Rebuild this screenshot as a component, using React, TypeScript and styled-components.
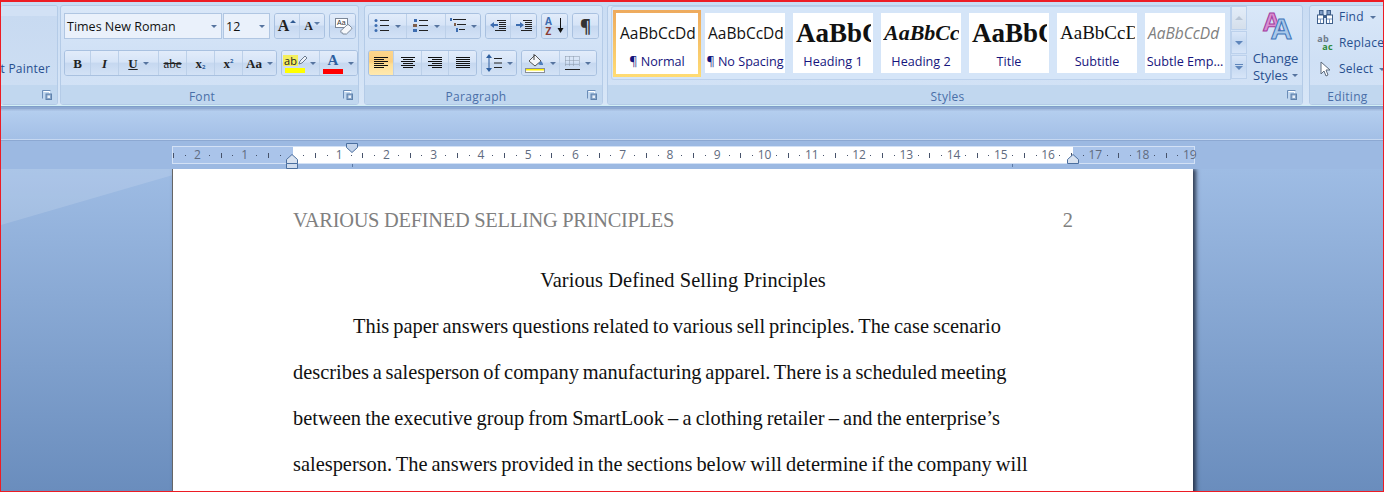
import styled, { createGlobalStyle } from "styled-components";
import type { ReactNode } from "react";

const GlobalStyle = createGlobalStyle`
  html, body { margin: 0; padding: 0; background: #fff; }
  body { font-family: "Open Sans", "Liberation Sans", sans-serif; }
`;

const UI = `"Open Sans", "Liberation Sans", sans-serif`;
const SERIF = `"Liberation Serif", "Times New Roman", serif`;
const QUARTER = 47.25 / 4;

// ---------- small drawings ----------
const Lines = ({ rows }: { rows: [number, number][] }) => (
  <svg width="16" height="12" viewBox="0 0 16 12">
    {rows.map(([x, w], i) => (
      <rect key={i} x={x} y={i * 2} width={w} height="1" fill="#111" />
    ))}
  </svg>
);

const ListIcon = ({ marks }: { marks: ReactNode }) => (
  <svg width="16" height="15" viewBox="0 0 16 15">
    {marks}
    <rect x="6" y="1" width="9" height="1" fill="#222" />
    <rect x="6" y="6" width="9" height="1" fill="#222" />
    <rect x="6" y="11" width="9" height="1" fill="#222" />
  </svg>
);

const Launcher = () => (
  <svg width="10" height="10" viewBox="0 0 10 10">
    <path d="M.5 8.5v-8h8" fill="none" stroke="#6b8db8" />
    <path d="M1.5 1.5h6v2" fill="none" stroke="#fff" />
    <rect x="4" y="4" width="5.5" height="5.5" fill="#8aa6c8" stroke="#5f82ad" />
    <rect x="5.5" y="5.5" width="2.5" height="2.5" fill="#e8f0fa" />
  </svg>
);

const IndentMark = ({ down, box }: { down?: boolean; box?: boolean }) => (
  <svg width="12" height={box ? 15 : 10} viewBox={box ? "0 0 12 15" : "0 0 12 10"}>
    {down ? (
      <path d="M.5.5h11v4L6 9.5.5 4.5z" fill="#c3d3ea" stroke="#4b6f9f" />
    ) : (
      <path d="M6 .5l5.5 5v4H.5v-4z" fill="#d8e2f0" stroke="#4b6f9f" />
    )}
    {box && <path d="M.5 9.5h11v5H.5z" fill="#cfdcee" stroke="#4b6f9f" />}
  </svg>
);

// ---------- page frame ----------
const Frame = styled.div`
  width: 1384px;
  height: 492px;
  box-sizing: border-box;
  border: 1px solid #ed1c24;
  border-top-width: 2px;
  display: flex;
  flex-direction: column;
  overflow: hidden;
  background: #9cb9e2;
`;

// ---------- ribbon ----------
const Ribbon = styled.div`
  height: 104px;
  flex: none;
  box-sizing: border-box;
  padding-top: 3px;
  display: flex;
  align-items: flex-start;
  background: linear-gradient(#c9dcf3, #d8e6f7);
  border-bottom: 1px solid #d3f0f6;
`;

const Group = styled.section<{ $w: number; $ml?: number; $cut?: boolean }>`
  width: ${(p) => p.$w}px;
  margin-left: ${(p) => p.$ml ?? 0}px;
  height: 100px;
  flex: none;
  box-sizing: border-box;
  border: 1px solid #b4cbe7;
  border-left-width: ${(p) => (p.$cut ? 0 : 1)}px;
  border-radius: 3px;
  display: flex;
  flex-direction: column;
  overflow: hidden;
  background: linear-gradient(#d9e7f8, #cfe0f5 55%, #d4e3f6);
`;

const Body = styled.div`
  flex: 1;
  box-sizing: border-box;
  padding: 7px 0 0 3px;
  display: flex;
  flex-direction: column;
  gap: 11px;
`;

const Footer = styled.div`
  height: 19px;
  flex: none;
  display: flex;
  align-items: center;
  padding-right: 5px;
  background: #c1d7ef;
  color: #4a6fa8;
  font-size: 12px;
  letter-spacing: 0.3px;
`;

const FooterText = styled.span`
  flex: 1;
  text-align: center;
  padding-top: 3px;
`;

const Row = styled.div`
  height: 26px;
  display: flex;
  gap: 4px;
`;

const PainterBody = styled.div`
  flex: 1;
  background: linear-gradient(#d2e1f5 0 10px, #c8daf1 10px, #cddef3);
  display: flex;
  justify-content: flex-end;
  align-items: flex-end;
  padding: 0 7px 8px 0;
  color: #274f8f;
  font-size: 12px;
  letter-spacing: 0.2px;
  white-space: nowrap;
`;

const Combo = styled.div<{ $w: number }>`
  width: ${(p) => p.$w}px;
  box-sizing: border-box;
  padding: 0 4px 0 2px;
  display: flex;
  align-items: center;
  justify-content: space-between;
  background: #eaf1fb;
  border: 1px solid #b0c6e2;
  color: #111;
  font-size: 12.5px;
  white-space: nowrap;
`;

const Combos = styled.div`
  display: flex;
  gap: 1px;
`;

const Caret = styled.i`
  width: 0;
  height: 0;
  flex: none;
  border-left: 3px solid transparent;
  border-right: 3px solid transparent;
  border-top: 3px solid #56749f;
`;

const Tools = styled.div`
  display: flex;
  border: 1px solid #a9c1e0;
  border-radius: 3px;
  overflow: hidden;
`;

const Tool = styled.div<{ $w: number; $on?: boolean }>`
  width: ${(p) => p.$w}px;
  box-sizing: border-box;
  display: flex;
  align-items: center;
  justify-content: center;
  gap: 5px;
  border-right: 1px solid #bcd0e9;
  background: ${(p) =>
    p.$on
      ? "linear-gradient(#fdd58c, #fbcf80 45%, #ffdf96 55%, #ffe9b0)"
      : "linear-gradient(#e2ecfa, #d6e4f7 45%, #c6d8f0 52%, #d3e2f6)"};
  &:last-child { border-right: 0; }
`;

const Glyph = styled.span<{
  $size?: number;
  $bold?: boolean;
  $italic?: boolean;
  $color?: string;
  $line?: "underline" | "line-through";
}>`
  font-family: ${SERIF};
  font-size: ${(p) => p.$size ?? 13}px;
  font-weight: ${(p) => (p.$bold === false ? 400 : 700)};
  font-style: ${(p) => (p.$italic ? "italic" : "normal")};
  color: ${(p) => p.$color ?? "#222"};
  text-decoration: ${(p) => p.$line ?? "none"};
  line-height: 1;
`;

const Low = styled.sub`
  font-family: ${UI};
  font-size: 6px;
  font-weight: 700;
  color: #2d5f9e;
  vertical-align: -1px;
`;

const High = styled.sup`
  font-family: ${UI};
  font-size: 6px;
  font-weight: 700;
  color: #2d5f9e;
  vertical-align: 5px;
`;

const Grow = styled.span`
  display: flex;
  align-items: flex-start;
  gap: 1px;
`;

const UpCaret = styled.i<{ $flip?: boolean }>`
  width: 0;
  height: 0;
  margin-top: 2px;
  border-left: 3px solid transparent;
  border-right: 3px solid transparent;
  border-bottom: ${(p) => (p.$flip ? "0" : "3px solid #2f5a92")};
  border-top: ${(p) => (p.$flip ? "3px solid #5c7da8" : "0")};
`;

const ColorMark = styled.span`
  display: flex;
  flex-direction: column;
  align-items: center;
  width: 20px;
`;

const ColorBar = styled.i<{ $color: string }>`
  width: 20px;
  height: 5px;
  margin-top: 1px;
  background: ${(p) => p.$color};
`;

const HighlightAb = styled.span`
  font-family: ${UI};
  font-size: 11px;
  line-height: 11px;
  color: #222;
  background: #f4ee5c;
  padding: 0 1px;
`;

const PenLine = styled.span`
  display: flex;
  align-items: center;
  height: 13px;
`;

const SortStack = styled.span`
  display: flex;
  flex-direction: column;
  align-items: center;
  font-family: ${UI};
  font-weight: 700;
  font-size: 10px;
  line-height: 10px;
`;

const SortLetter = styled.span<{ $color: string }>`
  color: ${(p) => p.$color};
`;

const Pilcrow = styled.span`
  font-family: ${UI};
  font-size: 17px;
  font-weight: 700;
  line-height: 1;
  color: #333;
`;

// ---------- styles gallery ----------
const StylesBody = styled.div`
  flex: 1;
  min-height: 0;
  display: flex;
  padding-left: 3px;
`;

const Gallery = styled.div`
  width: 620px;
  height: 74px;
  box-sizing: border-box;
  border: 1px solid #bcd1ec;
  border-top-color: #b9cfeb;
  border-radius: 3px 0 0 3px;
  display: flex;
  align-items: center;
  gap: 8px;
  padding-left: 1px;
  background: #d5e5f8;
`;

const Tile = styled.div<{ $on?: boolean }>`
  width: ${(p) => (p.$on ? 88 : 80)}px;
  height: ${(p) => (p.$on ? 67 : 60)}px;
  margin-right: ${(p) => (p.$on ? -4 : 0)}px;
  box-sizing: border-box;
  flex: none;
  display: flex;
  flex-direction: column;
  align-items: center;
  background: #fff;
  border: ${(p) => (p.$on ? "3px solid" : "0")};
  border-image: ${(p) => (p.$on ? "linear-gradient(#eeab5e, #ffdb73) 1" : "none")};
  overflow: hidden;
`;

const Preview = styled.div<{
  $font?: string;
  $size: number;
  $bold?: boolean;
  $italic?: boolean;
  $color?: string;
}>`
  width: 76px;
  height: 40px;
  flex: none;
  display: flex;
  align-items: center;
  justify-content: flex-start;
  padding-left: 1px;
  box-sizing: border-box;
  overflow: hidden;
  white-space: nowrap;
  font-family: ${(p) => p.$font ?? UI};
  font-size: ${(p) => p.$size}px;
  font-weight: ${(p) => (p.$bold ? 700 : 400)};
  font-style: ${(p) => (p.$italic ? "italic" : "normal")};
  color: ${(p) => p.$color ?? "#111"};
`;

const Caption = styled.div`
  height: 20px;
  line-height: 18px;
  font-size: 12.6px;
  color: #15157d;
  white-space: nowrap;
`;

const Scroller = styled.div`
  width: 16px;
  height: 74px;
  display: flex;
  flex-direction: column;
  gap: 1px;
`;

const ScrollBtn = styled.div<{ $h: number; $dim?: boolean }>`
  height: ${(p) => p.$h}px;
  box-sizing: border-box;
  border: 1px solid #bcd1ec;
  display: flex;
  flex-direction: column;
  align-items: center;
  justify-content: center;
  gap: 1px;
  background: ${(p) =>
    p.$dim
      ? "linear-gradient(#e3edf9, #d5dfeb)"
      : "linear-gradient(#d9e6f8, #c6d9f1 50%, #d7e5f8)"};
`;

const ScrollCaret = styled.i<{ $up?: boolean; $color?: string }>`
  width: 0;
  height: 0;
  border-left: 4px solid transparent;
  border-right: 4px solid transparent;
  border-top: ${(p) => (p.$up ? "0" : `4px solid ${p.$color ?? "#5f86bb"}`)};
  border-bottom: ${(p) => (p.$up ? `4px solid ${p.$color ?? "#b9c6d6"}` : "0")};
`;

const ScrollBar = styled.i`
  width: 8px;
  height: 1px;
  background: #5f86bb;
`;

const Changer = styled.div`
  width: 54px;
  box-sizing: border-box;
  padding-left: 3px;
  display: flex;
  flex-direction: column;
  align-items: center;
  color: #274f8f;
  font-size: 13px;
  line-height: 17px;
  white-space: nowrap;
`;

const BigAs = styled.div`
  position: relative;
  width: 34px;
  height: 41px;
  margin-bottom: 3px;
`;

const BigA = styled.span<{ $color: string; $fill: string; $left: number; $top: number; $size: number }>`
  position: absolute;
  left: ${(p) => p.$left}px;
  top: ${(p) => p.$top}px;
  font-family: "Liberation Sans", sans-serif;
  font-weight: 700;
  font-size: ${(p) => p.$size}px;
  line-height: 1;
  color: ${(p) => p.$fill};
  -webkit-text-stroke: 1px ${(p) => p.$color};
`;

const ChangeLine = styled.span`
  display: flex;
  align-items: center;
  gap: 4px;
`;

// ---------- editing ----------
const EditList = styled.div`
  flex: 1;
  min-height: 0;
  display: flex;
  flex-direction: column;
  padding-left: 7px;
  color: #274f8f;
  font-size: 12px;
  letter-spacing: 0.2px;
`;

const EditItem = styled.div`
  height: 26px;
  flex: none;
  display: flex;
  align-items: flex-start;
  gap: 6px;
  line-height: 22px;
  white-space: nowrap;
  ${Caret} { margin-top: 10px; }
`;

const IconSlot = styled.span`
  width: 16px;
  height: 22px;
  flex: none;
  display: flex;
  align-items: center;
  justify-content: center;
`;

const ReplaceMark = styled.span`
  display: flex;
  flex-direction: column;
  font-family: ${UI};
  font-size: 9px;
  line-height: 8px;
  font-weight: 700;
`;

const ReplaceAb = styled.span`
  color: #6f7b8a;
`;

const ReplaceAc = styled.span`
  color: #2f8a3a;
  margin-left: 5px;
`;

// ---------- ruler and document ----------
const TitleBand = styled.div`
  height: 34px;
  flex: none;
  box-sizing: border-box;
  border-top: 1px solid #7f9ec9;
  border-bottom: 1px solid #c6d8f1;
  background: linear-gradient(#8ea9d2 0 2px, #a3bbde 2px 3px, #b4ceef 4px, #a3bfe6);
`;

const RulerBand = styled.div`
  height: 29px;
  flex: none;
  position: relative;
  box-sizing: border-box;
  padding: 5px 0 0 171px;
  border-top: 1px solid #8ca8d2;
  background: #9cb9e2;
`;

const RulerStrip = styled.div`
  width: 1023px;
  height: 18px;
  box-sizing: border-box;
  border: 1px solid #d3e1f5;
  background: linear-gradient(to right, #aac4ea 120px, #fff 120px, #fff 900px, #aac4ea 900px);
`;

const RulerTrack = styled.div`
  display: flex;
  height: 16px;
  margin-left: -5px;
`;

const RulerCell = styled.div`
  width: ${QUARTER}px;
  flex: none;
  display: flex;
  align-items: center;
  justify-content: center;
  font-size: 12px;
  line-height: 16px;
  color: #5f6b80;
`;

const TickDot = styled.i`
  width: 1px;
  height: 1px;
  background: #46526a;
`;

const TickBar = styled.i`
  width: 1px;
  height: 5px;
  background: #46526a;
`;

const Marker = styled.div<{ $x: number; $y: number }>`
  position: absolute;
  left: ${(p) => p.$x}px;
  top: ${(p) => p.$y}px;
  line-height: 0;
`;

const TabTick = styled.i<{ $x: number }>`
  position: absolute;
  left: ${(p) => p.$x}px;
  top: 23px;
  width: 1px;
  height: 3px;
  background: #5b7aa6;
`;

const Workspace = styled.main`
  flex: 1;
  min-height: 0;
  position: relative;
  display: flex;
  padding-left: 171px;
  overflow: hidden;
  background: linear-gradient(#9ebce4, #6a8dbd);
`;

const Swoosh = styled.div`
  position: absolute;
  left: 0;
  top: 0;
  width: 172px;
  height: 56px;
  background: rgba(255, 255, 255, 0.14);
  clip-path: polygon(0 0, 100% 0, 100% 6px, 0 100%);
`;

const Sheet = styled.article`
  position: relative;
  width: 1021px;
  height: 400px;
  flex: none;
  box-sizing: border-box;
  padding: 36px 120px 0 120px;
  background: #fff;
  border-left: 1px solid #666;
  box-shadow: 3px 0 4px rgba(30, 40, 60, 0.85);
  font-family: ${SERIF};
  font-size: 20.4px;
  color: #111;
`;

const PageHeader = styled.header`
  width: 780px;
  height: 30px;
  margin-bottom: 22px;
  display: flex;
  justify-content: space-between;
  align-items: center;
  color: #808080;
`;

const HeaderTitle = styled.span`
  letter-spacing: -0.26px;
`;

const DocLine = styled.p<{ $center?: boolean; $indent?: boolean; $spread?: number; $track?: number }>`
  margin: 0;
  width: 780px;
  height: 46px;
  line-height: 46px;
  white-space: nowrap;
  text-align: ${(p) => (p.$center ? "center" : "left")};
  padding-left: ${(p) => (p.$indent ? 60 : 0)}px;
  box-sizing: border-box;
  word-spacing: ${(p) => p.$spread ?? 0}px;
  letter-spacing: ${(p) => p.$track ?? 0}px;
`;

// ---------- data ----------
const tiles = [
  { name: "¶ No Spacing", sample: "AaBbCcDd", size: 15.5 },
  { name: "Heading 1", sample: "AaBbC", size: 27, font: SERIF, bold: true },
  { name: "Heading 2", sample: "AaBbCc", size: 22, font: SERIF, bold: true, italic: true },
  { name: "Title", sample: "AaBbC", size: 27, font: SERIF, bold: true },
  { name: "Subtitle", sample: "AaBbCcD", size: 19, font: SERIF },
  { name: "Subtle Emp...", sample: "AaBbCcDd", size: 15.5, italic: true, color: "#808080" },
];

const rulerMarks = Array.from({ length: 87 }, (_, i) => i - 10);

const dots = (
  <>
    <circle cx="2" cy="1.5" r="1.5" fill="#3d6db0" />
    <circle cx="2" cy="6.5" r="1.5" fill="#3d6db0" />
    <circle cx="2" cy="11.5" r="1.5" fill="#3d6db0" />
  </>
);

const numbers = (
  <>
    <rect x="1" y="0" width="3" height="3" fill="#3d6db0" />
    <rect x="0" y="5" width="4" height="3" fill="#7f5f4a" />
    <rect x="0" y="10" width="4" height="3" fill="#3d6db0" />
  </>
);

const App = () => {
  return (
    <Frame>
      <GlobalStyle />
      <Ribbon>
        <Group $w={57} $cut>
          <PainterBody>t Painter</PainterBody>
          <Footer>
            <FooterText />
            <Launcher />
          </Footer>
        </Group>

        <Group $w={299} $ml={2}>
          <Body>
            <Row>
              <Combos>
                <Combo $w={158}>Times New Roman<Caret /></Combo>
                <Combo $w={47}>12<Caret /></Combo>
              </Combos>
              <Tools>
                <Tool $w={25}>
                  <Grow><Glyph $size={16}>A</Glyph><UpCaret /></Grow>
                </Tool>
                <Tool $w={24}>
                  <Grow><Glyph $size={12}>A</Glyph><UpCaret $flip /></Grow>
                </Tool>
              </Tools>
              <Tools>
                <Tool $w={25}>
                  <svg width="20" height="19" viewBox="0 0 20 19">
                    <rect x="2.5" y="1.5" width="12" height="9" fill="#fff" stroke="#7b8798" />
                    <text x="4" y="8" fontFamily="Liberation Sans" fontSize="7" fill="#333">Aa</text>
                    <path d="M7 14.5l7-6.5q1-1 2 0l2.5 2.5q.7.9 0 1.7l-5 4.8H10z" fill="#f6f8fb" stroke="#7d8a9a" />
                    <path d="M7.5 14l4 3.5" stroke="#aab6c5" />
                  </svg>
                </Tool>
              </Tools>
            </Row>
            <Row>
              <Tools>
                <Tool $w={26}><Glyph>B</Glyph></Tool>
                <Tool $w={28}><Glyph $italic>I</Glyph></Tool>
                <Tool $w={40}><Glyph $line="underline">U</Glyph><Caret /></Tool>
                <Tool $w={28}><Glyph $line="line-through" $bold={false}>abe</Glyph></Tool>
                <Tool $w={28}><Glyph>x<Low>2</Low></Glyph></Tool>
                <Tool $w={28}><Glyph>x<High>2</High></Glyph></Tool>
                <Tool $w={33}><Glyph>Aa</Glyph><Caret /></Tool>
              </Tools>
              <Tools>
                <Tool $w={38}>
                  <ColorMark>
                    <PenLine>
                      <HighlightAb>ab</HighlightAb>
                      <svg width="9" height="11" viewBox="0 0 9 11">
                        <path d="M1 9l1-3 5-5 2 2-5 5z" fill="#eef3fa" stroke="#6b7b8f" />
                      </svg>
                    </PenLine>
                    <ColorBar $color="#ffff00" />
                  </ColorMark>
                  <Caret />
                </Tool>
                <Tool $w={37}>
                  <ColorMark>
                    <Glyph $size={15} $color="#2e5f9f">A</Glyph>
                    <ColorBar $color="#ff0000" />
                  </ColorMark>
                  <Caret />
                </Tool>
              </Tools>
            </Row>
          </Body>
          <Footer><FooterText>Font</FooterText><Launcher /></Footer>
        </Group>

        <Group $w={239} $ml={5}>
          <Body>
            <Row>
              <Tools>
                <Tool $w={38}><ListIcon marks={dots} /><Caret /></Tool>
                <Tool $w={39}><ListIcon marks={numbers} /><Caret /></Tool>
                <Tool $w={34}>
                  <svg width="16" height="16" viewBox="0 0 16 16">
                    <path d="M3 1.5h13M7 6.5h9M9 11.5h6" stroke="#222" />
                    <rect x="0" y="0" width="2" height="3" fill="#3d6db0" />
                    <rect x="4" y="5" width="2" height="3" fill="#7f5f4a" />
                    <rect x="6" y="10" width="2" height="4" fill="#3d6db0" />
                  </svg>
                  <Caret />
                </Tool>
              </Tools>
              <Tools>
                <Tool $w={25}>
                  <svg width="16" height="14" viewBox="0 0 16 14">
                    <path d="M7 1.5h9M9 3.5h7M9 5.5h7M9 7.5h7M9 9.5h7M5 11.5h11" stroke="#222" />
                    <path d="M0 6l4-3v2h4v2H4v2z" fill="#3d6db0" />
                  </svg>
                </Tool>
                <Tool $w={25}>
                  <svg width="16" height="14" viewBox="0 0 16 14">
                    <path d="M7 1.5h9M9 3.5h7M9 5.5h7M9 7.5h7M9 9.5h7M5 11.5h11" stroke="#222" />
                    <path d="M8 6L4 3v2H0v2h4v2z" fill="#3d6db0" />
                  </svg>
                </Tool>
              </Tools>
              <Tools>
                <Tool $w={25}>
                  <SortStack>
                    <SortLetter $color="#3d6db0">A</SortLetter>
                    <SortLetter $color="#8a3b34">Z</SortLetter>
                  </SortStack>
                  <svg width="7" height="16" viewBox="0 0 7 16">
                    <path d="M3.5 0v12" stroke="#111" />
                    <path d="M.5 10h6l-3 5z" fill="#111" />
                  </svg>
                </Tool>
              </Tools>
              <Tools>
                <Tool $w={25}><Pilcrow>¶</Pilcrow></Tool>
              </Tools>
            </Row>
            <Row>
              <Tools>
                <Tool $w={25} $on>
                  <Lines rows={[[1, 14], [1, 10], [1, 14], [1, 10], [1, 14], [1, 10]]} />
                </Tool>
                <Tool $w={28}>
                  <Lines rows={[[1, 14], [3, 10], [1, 14], [3, 10], [1, 14], [3, 10]]} />
                </Tool>
                <Tool $w={27}>
                  <Lines rows={[[1, 14], [5, 10], [1, 14], [5, 10], [1, 14], [5, 10]]} />
                </Tool>
                <Tool $w={27}>
                  <Lines rows={[[1, 14], [1, 14], [1, 14], [1, 14], [1, 14], [1, 14]]} />
                </Tool>
              </Tools>
              <Tools>
                <Tool $w={34}>
                  <svg width="16" height="18" viewBox="0 0 16 18">
                    <path d="M3 0l3 4H0zM3 18l3-4H0z" fill="#2e5f9f" />
                    <path d="M3 4v10" stroke="#2e5f9f" />
                    <path d="M8 4.5h8M8 9h8M8 13.5h8" stroke="#222" />
                  </svg>
                  <Caret />
                </Tool>
              </Tools>
              <Tools>
                <Tool $w={38}>
                  <svg width="20" height="20" viewBox="0 0 20 20">
                    <path d="M4 8l6-6 6 6-6 5z" fill="#f4f6fa" stroke="#555" />
                    <path d="M9 1v6" stroke="#444" />
                    <path d="M13 11l3-3c2 2 2 3 2 4h-3z" fill="#4f7fbe" />
                    <rect x=".5" y="15.5" width="19" height="4" fill="#fff" stroke="#8a8f96" />
                    <rect x="1" y="16" width="18" height="1.5" fill="#ffef00" />
                  </svg>
                  <Caret />
                </Tool>
                <Tool $w={36}>
                  <svg width="15" height="15" viewBox="0 0 15 15">
                    <path d="M.5.5h14M.5 4.5h14M.5 8.5h14M.5.5v10M4.5.5v10M8.5.5v10M14.5.5v10" stroke="#8896a8" strokeDasharray="1 1" />
                    <path d="M0 13.5h15" stroke="#222" />
                  </svg>
                  <Caret />
                </Tool>
              </Tools>
            </Row>
          </Body>
          <Footer><FooterText>Paragraph</FooterText><Launcher /></Footer>
        </Group>

        <Group $w={696} $ml={4}>
          <StylesBody>
            <Gallery>
              <Tile $on>
                <Preview $size={15.5}>AaBbCcDd</Preview>
                <Caption>¶ Normal</Caption>
              </Tile>
              {tiles.map((tile) => (
                <Tile key={tile.name}>
                  <Preview
                    $font={tile.font}
                    $size={tile.size}
                    $bold={tile.bold}
                    $italic={tile.italic}
                    $color={tile.color}
                  >
                    {tile.sample}
                  </Preview>
                  <Caption>{tile.name}</Caption>
                </Tile>
              ))}
            </Gallery>
            <Scroller>
              <ScrollBtn $h={24} $dim><ScrollCaret $up /></ScrollBtn>
              <ScrollBtn $h={23}><ScrollCaret /></ScrollBtn>
              <ScrollBtn $h={24}><ScrollBar /><ScrollCaret /></ScrollBtn>
            </Scroller>
            <Changer>
              <BigAs>
                <BigA $color="#a43c9e" $fill="#d98fd2" $left={4} $top={3} $size={26}>A</BigA>
                <BigA $color="#3e74b8" $fill="#a9c8ea" $left={12} $top={8} $size={30}>A</BigA>
              </BigAs>
              <span>Change</span>
              <ChangeLine>Styles <Caret /></ChangeLine>
            </Changer>
          </StylesBody>
          <Footer><FooterText>Styles</FooterText><Launcher /></Footer>
        </Group>

        <Group $w={82} $ml={6}>
          <EditList>
            <EditItem>
              <IconSlot>
                <svg width="16" height="14" viewBox="0 0 16 14">
                  <rect x="2.5" y=".5" width="3.5" height="4" fill="#7c9ac4" stroke="#3f5f8a" />
                  <rect x="10" y=".5" width="3.5" height="4" fill="#7c9ac4" stroke="#3f5f8a" />
                  <rect x=".5" y="5" width="6" height="8.5" fill="#fff" stroke="#3f5f8a" />
                  <rect x="9.5" y="5" width="6" height="8.5" fill="#fff" stroke="#3f5f8a" />
                  <rect x="6" y="5" width="4" height="3" fill="#3f5f8a" />
                  <path d="M1 9h5M10 9h5M3.5 9v4M12.5 9v4" stroke="#7c9ac4" />
                </svg>
              </IconSlot>
              Find <Caret />
            </EditItem>
            <EditItem>
              <IconSlot>
                <ReplaceMark>
                  <ReplaceAb>ab</ReplaceAb>
                  <ReplaceAc>ac</ReplaceAc>
                </ReplaceMark>
              </IconSlot>
              Replace
            </EditItem>
            <EditItem>
              <IconSlot>
                <svg width="11" height="16" viewBox="0 0 11 16">
                  <path d="M1 1v12l3-3 2 5 2-1-2-5h4z" fill="#fff" stroke="#5c6a7c" />
                </svg>
              </IconSlot>
              Select <Caret />
            </EditItem>
          </EditList>
          <Footer><FooterText>Editing</FooterText></Footer>
        </Group>
      </Ribbon>

      <TitleBand />

      <RulerBand>
        <RulerStrip>
          <RulerTrack>
            {rulerMarks.map((q) => (
              <RulerCell key={q}>
                {q % 4 === 0 ? (q === 0 ? null : Math.abs(q / 4)) : q % 2 === 0 ? <TickBar /> : <TickDot />}
              </RulerCell>
            ))}
          </RulerTrack>
        </RulerStrip>
        <Marker $x={345} $y={2}><IndentMark down /></Marker>
        <Marker $x={285} $y={13}><IndentMark box /></Marker>
        <Marker $x={1066} $y={13}><IndentMark /></Marker>
        <TabTick $x={351} />
        <TabTick $x={1011} />
      </RulerBand>

      <Workspace>
        <Swoosh />
        <Sheet>
          <PageHeader>
            <HeaderTitle>VARIOUS DEFINED SELLING PRINCIPLES</HeaderTitle>
            <span>2</span>
          </PageHeader>
          <DocLine $center $track={0.09}>Various Defined Selling Principles</DocLine>
          <DocLine $indent $spread={-1.08}>This paper answers questions related to various sell principles. The case scenario</DocLine>
          <DocLine $spread={-1.3}>describes a salesperson of company manufacturing apparel. There is a scheduled meeting</DocLine>
          <DocLine $spread={-0.9}>between the executive group from SmartLook – a clothing retailer – and the enterprise’s</DocLine>
          <DocLine $spread={-1.05}>salesperson. The answers provided in the sections below will determine if the company will</DocLine>
        </Sheet>
      </Workspace>
    </Frame>
  );
};

export default App;
